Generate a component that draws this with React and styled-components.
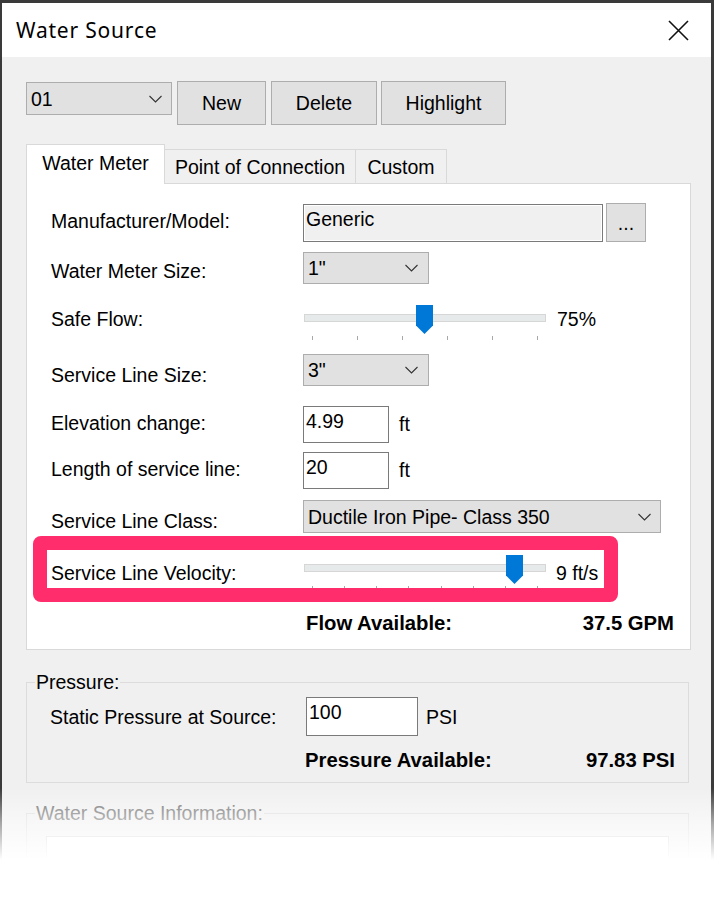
import styled, { createGlobalStyle } from "styled-components";

const GlobalStyle = createGlobalStyle`
  html, body {
    margin: 0;
    padding: 0;
  }
  body {
    background: #3a3a3a;
    font-family: "Liberation Sans", Arial, sans-serif;
    overflow: hidden;
  }
`;

const Screen = styled.div`
  position: relative;
  height: 902px;
  box-sizing: border-box;
  padding: 3px 3px 0 2px;
  overflow: hidden;
`;

const Dialog = styled.div`
  height: 100%;
  background: #f0f0f0;
  color: #000;
  font-size: 19.5px;
  line-height: 22px;
`;

const TitleBar = styled.div`
  height: 54px;
  display: flex;
  align-items: center;
  justify-content: space-between;
  padding: 0 22px 0 14px;
  background: #fff;
`;

const Title = styled.div`
  font-family: "Noto Sans", "Open Sans", sans-serif;
  font-size: 21px;
  letter-spacing: 0.8px;
  color: #000;
`;

const Body = styled.div`
  padding: 24px 20px 0 24px;
`;

const Toolbar = styled.div`
  display: flex;
  align-items: flex-start;
  gap: 5px;
`;

const Button = styled.button`
  width: ${(p) => p.$w}px;
  height: ${(p) => p.$h || 44}px;
  padding: 0;
  background: #e1e1e1;
  border: 1px solid #adadad;
  font-family: "Liberation Sans", Arial, sans-serif;
  font-size: 19.5px;
  line-height: 22px;
  color: #000;
  margin-left: ${(p) => p.$ml || 0}px;
`;

const Combo = styled.div`
  display: flex;
  align-items: center;
  justify-content: space-between;
  width: ${(p) => p.$w}px;
  height: ${(p) => p.$h || 32}px;
  box-sizing: border-box;
  margin-top: ${(p) => p.$mt || 0}px;
  padding: 0 ${(p) => p.$pr || 10}px 0 4px;
  background: #e1e1e1;
  border: 1px solid #adadad;
`;

const TabStrip = styled.div`
  display: flex;
  align-items: flex-end;
  margin-top: 19px;
  margin-bottom: -1px;
  position: relative;
`;

const Tab = styled.div`
  width: ${(p) => p.$w}px;
  height: ${(p) => (p.$active ? 40 : 35)}px;
  box-sizing: border-box;
  padding-top: ${(p) => (p.$active ? 7 : 6)}px;
  text-align: center;
  background: ${(p) => (p.$active ? "#fff" : "#f0f0f0")};
  border: 1px solid #d9d9d9;
  border-bottom: ${(p) => (p.$active ? "none" : "1px solid #d9d9d9")};
  border-left: ${(p) => (p.$first ? "1px solid #d9d9d9" : "none")};
`;

const Panel = styled.div`
  background: #fff;
  border: 1px solid #d9d9d9;
  padding: 19px 16px 15px 24px;
`;

const FormRow = styled.div`
  position: relative;
  display: flex;
  align-items: ${(p) => (p.$top ? "flex-start" : "center")};
  margin-top: ${(p) => p.$mt || 0}px;
`;

const Label = styled.div`
  width: ${(p) => p.$w || 252}px;
  flex-shrink: 0;
  margin-top: ${(p) => p.$offset || 0}px;
`;

const TextBox = styled.div`
  width: ${(p) => p.$w}px;
  height: ${(p) => p.$h}px;
  box-sizing: border-box;
  padding: 3px 2px 0;
  background: ${(p) => (p.$readOnly ? "#f0f0f0" : "#fff")};
  border: 1px solid #7a7a7a;
  box-shadow: ${(p) => (p.$readOnly ? "inset 0 0 0 1px #fff" : "none")};
`;

const Unit = styled.div`
  margin-left: ${(p) => p.$ml || 10}px;
  margin-top: ${(p) => p.$offset || 0}px;
`;

const SliderBox = styled.div`
  position: relative;
  width: 242px;
  height: 34px;
  margin-left: 1px;
`;

const Track = styled.div`
  margin-top: 9px;
  height: 8px;
  box-sizing: border-box;
  background: #e7eaea;
  border: 1px solid #d6d6d6;
`;

const Ticks = styled.div`
  display: flex;
  justify-content: space-between;
  padding: 0 8px;
  margin-top: 14px;
`;

const Tick = styled.span`
  width: 1px;
  height: 4px;
  background: #a8a8a8;
`;

const Thumb = styled.svg`
  position: absolute;
  top: 0;
  display: block;
`;

const Result = styled.div`
  display: flex;
  justify-content: space-between;
  margin: ${(p) => p.$mt}px 0 0 ${(p) => p.$ml}px;
  font-size: 20.3px;
  font-weight: 700;
`;

const Highlight = styled.div`
  position: absolute;
  left: -18px;
  top: -19px;
  width: 585px;
  height: 66px;
  box-sizing: border-box;
  border: 14px solid #ff2d6b;
  border-radius: 8px;
  pointer-events: none;
`;

const Group = styled.fieldset`
  margin: ${(p) => p.$mt}px 2px 0 0;
  padding: ${(p) => p.$pad};
  border: 1px solid #dcdcdc;
  min-width: 0;
`;

const Legend = styled.legend`
  margin-left: ${(p) => p.$ml}px;
  padding: 0 1px;
  color: ${(p) => (p.$muted ? "#6d6d6d" : "#000")};
`;

const InfoBox = styled.div`
  height: 120px;
  background: #fff;
  border: 1px solid #cfcfcf;
`;

const Fade = styled.div`
  position: absolute;
  left: 0;
  right: 0;
  top: 788px;
  bottom: 0;
  background: linear-gradient(
    to bottom,
    rgba(255, 255, 255, 0) 0px,
    rgba(255, 255, 255, 0.55) 35px,
    #fff 72px
  );
`;

function Chevron() {
  return (
    <svg width="13" height="8" viewBox="0 0 13 8">
      <polyline points="0.5,1 6.5,7 12.5,1" fill="none" stroke="#333" strokeWidth="1.1" />
    </svg>
  );
}

function CloseIcon() {
  return (
    <svg width="21" height="21" viewBox="0 0 21 21">
      <path d="M1 1 L20 20 M20 1 L1 20" stroke="#111" strokeWidth="1.6" />
    </svg>
  );
}

function Slider({ value, ticks }) {
  const left = 8 + value * 225 - 8.5;
  return (
    <SliderBox>
      <Track />
      <Ticks>
        {Array.from({ length: ticks }).map((_, i) => (
          <Tick key={i} />
        ))}
      </Ticks>
      <Thumb width="17" height="29" viewBox="0 0 17 29" style={{ left }}>
        <polygon points="0,0 17,0 17,20.5 8.5,29 0,20.5" fill="#0078d7" />
      </Thumb>
    </SliderBox>
  );
}

export default function App() {
  return (
    <Screen>
      <GlobalStyle />
      <Dialog>
        <TitleBar>
          <Title>Water Source</Title>
          <CloseIcon />
        </TitleBar>
        <Body>
          <Toolbar>
            <Combo $w={146} $h={33} $mt={1} $pr={9}>
              <span>01</span>
              <Chevron />
            </Combo>
            <Button $w={89}>New</Button>
            <Button $w={106}>Delete</Button>
            <Button $w={125} $ml={-1}>Highlight</Button>
          </Toolbar>

          <TabStrip>
            <Tab $w={139} $active $first>Water Meter</Tab>
            <Tab $w={191}>Point of Connection</Tab>
            <Tab $w={91}>Custom</Tab>
          </TabStrip>
          <Panel>
            <FormRow>
              <Label $offset={-3}>Manufacturer/Model:</Label>
              <TextBox $w={300} $h={38} $readOnly>Generic</TextBox>
              <Button $w={40} $h={39} $ml={3}>...</Button>
            </FormRow>
            <FormRow $mt={10}>
              <Label $offset={6}>Water Meter Size:</Label>
              <Combo $w={126}>
                <span>1"</span>
                <Chevron />
              </Combo>
            </FormRow>
            <FormRow $mt={21} $top>
              <Label $offset={3}>Safe Flow:</Label>
              <Slider value={0.5} ticks={6} />
              <Unit $ml={11} $offset={3}>75%</Unit>
            </FormRow>
            <FormRow $mt={15}>
              <Label $offset={10}>Service Line Size:</Label>
              <Combo $w={126}>
                <span>3"</span>
                <Chevron />
              </Combo>
            </FormRow>
            <FormRow $mt={20}>
              <Label $offset={-4}>Elevation change:</Label>
              <TextBox $w={86} $h={37}>4.99</TextBox>
              <Unit $offset={-2}>ft</Unit>
            </FormRow>
            <FormRow $mt={9}>
              <Label $offset={-4}>Length of service line:</Label>
              <TextBox $w={86} $h={37}>20</TextBox>
              <Unit $offset={-2}>ft</Unit>
            </FormRow>
            <FormRow $mt={11}>
              <Label $offset={8}>Service Line Class:</Label>
              <Combo $w={358} $h={33} $pr={9}>
                <span>Ductile Iron Pipe- Class 350</span>
                <Chevron />
              </Combo>
            </FormRow>
            <FormRow $mt={22} $top>
              <Label $offset={7}>Service Line Velocity:</Label>
              <Slider value={0.9} ticks={8} />
              <Unit $ml={10} $offset={7}>9 ft/s</Unit>
              <Highlight />
            </FormRow>
            <Result $mt={23} $ml={255}>
              <span>Flow Available:</span>
              <span>37.5 GPM</span>
            </Result>
          </Panel>

          <Group $mt={21} $pad="4px 13px 11px 23px">
            <Legend $ml={-15}>Pressure:</Legend>
            <FormRow>
              <Label $w={256}>Static Pressure at Source:</Label>
              <TextBox $w={112} $h={39}>100</TextBox>
              <Unit $ml={8}>PSI</Unit>
            </FormRow>
            <Result $mt={13} $ml={255}>
              <span>Pressure Available:</span>
              <span>97.83 PSI</span>
            </Result>
          </Group>

          <Group $mt={19} $pad="12px 19px 0 19px">
            <Legend $ml={-11} $muted>Water Source Information:</Legend>
            <InfoBox />
          </Group>
        </Body>
      </Dialog>
      <Fade />
    </Screen>
  );
}
